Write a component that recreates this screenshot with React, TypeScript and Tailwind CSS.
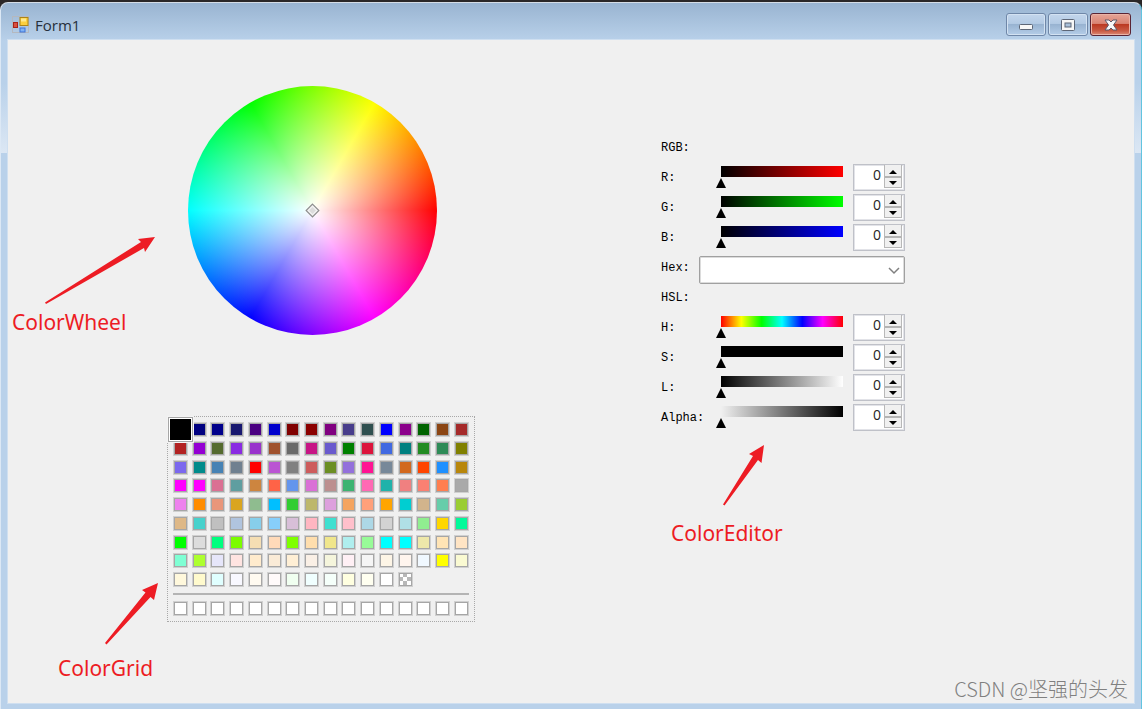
import { useState } from "react";

interface Channel {
  label: string;
  max: number;
  bar: string;
}

const rgbChannels: Channel[] = [
  { label: "R:", max: 255, bar: "bg-linear-to-r/srgb from-black to-[#ff0000]" },
  { label: "G:", max: 255, bar: "bg-linear-to-r/srgb from-black to-[#00ff00]" },
  { label: "B:", max: 255, bar: "bg-linear-to-r/srgb from-black to-[#0000ff]" },
];

const hslChannels: Channel[] = [
  {
    label: "H:",
    max: 359,
    bar: "bg-[linear-gradient(to_right,#ff0000,#ffff00,#00ff00,#00ffff,#0000ff,#ff00ff,#ff0000)]",
  },
  { label: "S:", max: 100, bar: "bg-black" },
  { label: "L:", max: 100, bar: "bg-linear-to-r/srgb from-black to-white" },
  { label: "Alpha:", max: 255, bar: "bg-linear-to-r/srgb from-[#f0f0f0] to-black" },
];

const palette = `
black navy darkblue midnightblue indigo mediumblue maroon darkred purple darkslateblue darkslategray blue darkmagenta darkgreen saddlebrown brown
firebrick darkviolet darkolivegreen blueviolet darkorchid sienna dimgray mediumvioletred slateblue green crimson royalblue teal forestgreen seagreen olive
mediumslateblue darkcyan steelblue slategray red mediumorchid gray indianred olivedrab mediumpurple deeppink lightslategray chocolate orangered dodgerblue darkgoldenrod
fuchsia magenta palevioletred cadetblue peru tomato cornflowerblue orchid rosybrown mediumseagreen hotpink lightseagreen lightcoral salmon coral darkgray
violet darkorange darksalmon goldenrod darkseagreen deepskyblue limegreen darkkhaki plum sandybrown lightsalmon orange darkturquoise tan mediumaquamarine yellowgreen
burlywood mediumturquoise silver lightsteelblue skyblue lightskyblue thistle lightpink turquoise pink lightblue lightgray powderblue lightgreen gold mediumspringgreen
lime gainsboro springgreen lawngreen wheat peachpuff chartreuse navajowhite khaki paleturquoise palegreen aqua cyan palegoldenrod moccasin bisque
aquamarine greenyellow lavender mistyrose blanchedalmond antiquewhite papayawhip linen beige lavenderblush whitesmoke oldlace seashell aliceblue yellow lightgoldenrodyellow
cornsilk lemonchiffon lightcyan ghostwhite floralwhite snow honeydew azure mintcream lightyellow ivory white transparent
`
  .trim()
  .split(/\s+/);

function AppIcon() {
  return (
    <svg className="mt-[6px]" width="18" height="18" viewBox="0 0 18 18" aria-hidden="true">
      <rect x="0.5" y="0.5" width="16" height="16" fill="none" stroke="#b4b8bf" />
      <rect x="1.5" y="6.5" width="4" height="5" fill="#d8503f" stroke="#a82218" />
      <rect x="8" y="1.5" width="8" height="8" fill="#fbcf3e" stroke="#ad8417" />
      <rect x="9" y="2.5" width="5" height="3" fill="#fde98f" />
      <rect x="8" y="12" width="5" height="4" fill="#7fb2f5" stroke="#3d72d6" />
    </svg>
  );
}

function TitleBar() {
  const plain =
    "flex h-[23px] w-10 items-center justify-center rounded-[3px] border border-[#6f87a8] bg-[linear-gradient(#c3d6ec,#b3cae4_45%,#98b3d1_50%,#b4cde8)] shadow-[inset_0_0_0_1px_#d3e2f2]";
  return (
    <header className="flex h-[37px] items-center pl-[11px] pr-[10px]">
      <AppIcon />
      <h1 className="ml-[5px] mt-[6px] font-['Open_Sans',sans-serif] text-[15px] leading-5 text-[#26303c]">
        Form1
      </h1>
      <div className="ml-auto mt-[6px] flex gap-[2px]">
        <button className={plain} aria-label="Minimize">
          <svg className="mt-1" width="14" height="8" viewBox="0 0 14 8">
            <rect x="0.5" y="1.5" width="13" height="5" rx="1" fill="#f7f7f7" stroke="#5d6677" />
          </svg>
        </button>
        <button className={plain} aria-label="Maximize">
          <svg width="14" height="12" viewBox="0 0 14 12">
            <rect x="0.5" y="0.5" width="13" height="11" rx="1" fill="#f7f7f7" stroke="#5d6677" />
            <rect x="4" y="4" width="6" height="4" fill="#a9c0da" stroke="#5d6677" />
          </svg>
        </button>
        <button
          className="flex h-[23px] w-[41px] items-center justify-center rounded-[3px] border border-[#5a2434] bg-[linear-gradient(#e6a598,#d98473_45%,#bb3a22_50%,#c95a43_80%,#dc8a76)] shadow-[inset_0_0_0_1px_#eab3a6]"
          aria-label="Close"
        >
          <svg width="14" height="12" viewBox="0 0 14 12">
            <path
              d="M1 1h4l2 2 2-2h4L9.500 6 13 11H9L7 9l-2 2H1l3.500-5z"
              fill="#f8f8f8"
              stroke="#5d5a6b"
              strokeLinejoin="round"
            />
          </svg>
        </button>
      </div>
    </header>
  );
}

function ColorWheel() {
  return (
    <div className="flex size-[249px] items-center justify-center rounded-full bg-[radial-gradient(circle_closest-side,#fff,rgba(255,255,255,0)),conic-gradient(from_90deg,#f00,#f0f,#00f,#0ff,#0f0,#ff0,#f00)]">
      <svg width="15" height="15" viewBox="0 0 14 14" aria-hidden="true">
        <path d="M7 1l6 6-6 6-6-6z" fill="#dcdcdc" stroke="#8c8c8c" />
        <path d="M7 3l4 4-4 4-4-4z" fill="none" stroke="#f4f4f4" />
      </svg>
    </div>
  );
}

function ColorGrid() {
  const [selected, setSelected] = useState("black");
  const cell = "relative size-[15px] border border-[#d0d0d0] shadow-[inset_0_0_0_1px_#a6a6a6]";

  return (
    <div className="w-[308px] border border-dotted border-[#a8a8a8] p-[5px]">
      <div className="grid h-[165px] grid-cols-[repeat(16,15px)] content-between justify-between">
        {palette.map((name) => (
          <button
            key={name}
            aria-label={name}
            onClick={() => setSelected(name)}
            className={
              name === "transparent"
                ? `${cell} bg-[repeating-conic-gradient(#b8b8b8_0_25%,#fff_0_50%)] bg-size-[8px_8px]`
                : cell
            }
            style={name === "transparent" ? undefined : { backgroundColor: name }}
          >
            {name === selected && (
              <span
                className="absolute -inset-[6px] z-10 border border-[#a6a6a6] shadow-[inset_0_0_0_1px_#fff,0_0_0_1px_#f4f4f4]"
                style={{ backgroundColor: name }}
              />
            )}
          </button>
        ))}
      </div>
      <hr className="mt-[6px] border-t-2 border-[#b4b4b4]" />
      <div className="mt-[6px] grid grid-cols-[repeat(16,15px)] justify-between">
        {Array.from({ length: 16 }, (_, i) => (
          <button key={i} aria-label={`Custom color ${i + 1}`} className={`${cell} bg-white`} />
        ))}
      </div>
    </div>
  );
}

function ChannelRow({ label, max, bar }: Channel) {
  const [value, setValue] = useState(0);
  const update = (next: number) => setValue(Math.min(max, Math.max(0, next || 0)));

  return (
    <div className="flex h-[30px] items-start">
      <label htmlFor={label} className="w-[55px] leading-8">
        {label}
      </label>
      <div className="mt-1 flex flex-1 flex-col gap-px">
        <div className={`mx-[5px] h-[11px] ${bar}`} />
        <input
          type="range"
          aria-label={`${label} slider`}
          min={0}
          max={max}
          value={value}
          onChange={(e) => update(Number(e.target.value))}
          className="h-[10px] w-full appearance-none bg-transparent [&::-webkit-slider-thumb]:size-[10px] [&::-webkit-slider-thumb]:appearance-none [&::-webkit-slider-thumb]:bg-black [&::-webkit-slider-thumb]:[clip-path:polygon(50%_0,100%_100%,0_100%)]"
        />
      </div>
      <div className="ml-[5px] mt-[2px] flex h-[27px] w-[52px] border border-[#bfc1c8] bg-white pr-[2px] shadow-[inset_0_0_0_1px_#e2e3e8]">
        <input
          id={label}
          type="text"
          inputMode="numeric"
          value={value}
          onChange={(e) => update(Number(e.target.value))}
          className="h-5 w-0 flex-1 bg-transparent pr-[3px] text-right font-['Open_Sans',sans-serif] text-sm text-[#222]"
        />
        <div className="flex h-[23px] w-[18px] flex-col border border-t-0 border-[#b8b8b8] bg-[#f0f0f0]">
          <button
            className="flex flex-1 items-center justify-center border-b-2 border-[#b4b4b4] pt-[2px]"
            aria-label={`Increase ${label}`}
            onClick={() => update(value + 1)}
          >
            <svg width="8" height="4" viewBox="0 0 8 4">
              <path d="M4 0l4 4H0z" />
            </svg>
          </button>
          <button
            className="flex flex-1 items-center justify-center"
            aria-label={`Decrease ${label}`}
            onClick={() => update(value - 1)}
          >
            <svg width="8" height="4" viewBox="0 0 8 4">
              <path d="M0 0h8L4 4z" />
            </svg>
          </button>
        </div>
      </div>
    </div>
  );
}

function ColorEditor() {
  return (
    <div className="w-[244px] font-['Liberation_Mono',monospace] text-xs text-black">
      <p className="h-[30px] leading-8">RGB:</p>
      {rgbChannels.map((c) => (
        <ChannelRow key={c.label} {...c} />
      ))}
      <div className="flex h-[30px] items-start">
        <label htmlFor="hex" className="w-[38px] leading-8">
          Hex:
        </label>
        <div className="relative mt-1 flex-1">
          <select
            id="hex"
            className="block h-7 w-full appearance-none rounded-[2px] border border-[#a0a0a0] bg-white shadow-[inset_0_0_0_1px_#dcdcdc]"
          >
            <option></option>
          </select>
          <svg
            className="pointer-events-none absolute right-[5px] top-[11px]"
            width="12"
            height="8"
            viewBox="0 0 12 8"
            fill="none"
            stroke="#808080"
            strokeWidth="1.500"
          >
            <path d="M1 1l5 5 5-5" />
          </svg>
        </div>
      </div>
      <p className="h-[30px] leading-8">HSL:</p>
      {hslChannels.map((c) => (
        <ChannelRow key={c.label} {...c} />
      ))}
    </div>
  );
}

// Red callouts drawn over the form
function Notes() {
  const text = "absolute font-['Noto_Sans',sans-serif] text-[21px] leading-7 text-[#ed1c24]";
  return (
    <div className="pointer-events-none absolute inset-0">
      <svg className="absolute left-[37px] top-[197px]" width="110" height="68" fill="#ed1c24">
        <path d="M110 0L93 2l3 3L0 65.500l1 1.500 98-56 1 4z" />
      </svg>
      <p className={`${text} left-1 top-[268px]`}>ColorWheel</p>
      <svg className="absolute left-[97px] top-[543px]" width="54" height="62" fill="#ed1c24">
        <path d="M53 0L37 7l3.500 2.500L0 60l1.500 1.500L45.500 14l3.500 3z" />
      </svg>
      <p className={`${text} left-[50px] top-[614px]`}>ColorGrid</p>
      <svg className="absolute left-[715px] top-[405px]" width="42" height="61" fill="#ed1c24">
        <path d="M41 0L26 9l4 2L0 59.500l1.500 1L35 15l3.500 3z" />
      </svg>
      <p className={`${text} left-[663px] top-[479px]`}>ColorEditor</p>
    </div>
  );
}

export default function App() {
  return (
    <div className="flex min-h-screen flex-col bg-[#2a2728] pt-[2px]">
      <div className="flex flex-1 flex-col rounded-t-lg border-l border-r border-t border-l-[#dce8f5] border-r-[#62c4e0] border-t-[#d5dde6] bg-[linear-gradient(#99b4d1,#b9d1ea_38px,#b9d1ea_80px,#dce7f4_150px,#b9d1ea_150px)]">
        <TitleBar />
        <main className="relative mx-[7px] mb-[6px] flex flex-1 items-start overflow-hidden bg-[#f0f0f0] shadow-[0_0_0_1px_#cfdff0]">
          <div className="ml-[159px] mt-[46px] flex flex-col">
            <div className="ml-[21px]">
              <ColorWheel />
            </div>
            <div className="mt-[81px]">
              <ColorGrid />
            </div>
          </div>
          <div className="ml-[186px] mt-[92px]">
            <ColorEditor />
          </div>
          <Notes />
          <p className="absolute bottom-0 right-[6px] font-['Noto_Sans_CJK_SC',sans-serif] text-[20px] font-light leading-7 text-[#808080]">
            CSDN @坚强的头发
          </p>
        </main>
      </div>
    </div>
  );
}
